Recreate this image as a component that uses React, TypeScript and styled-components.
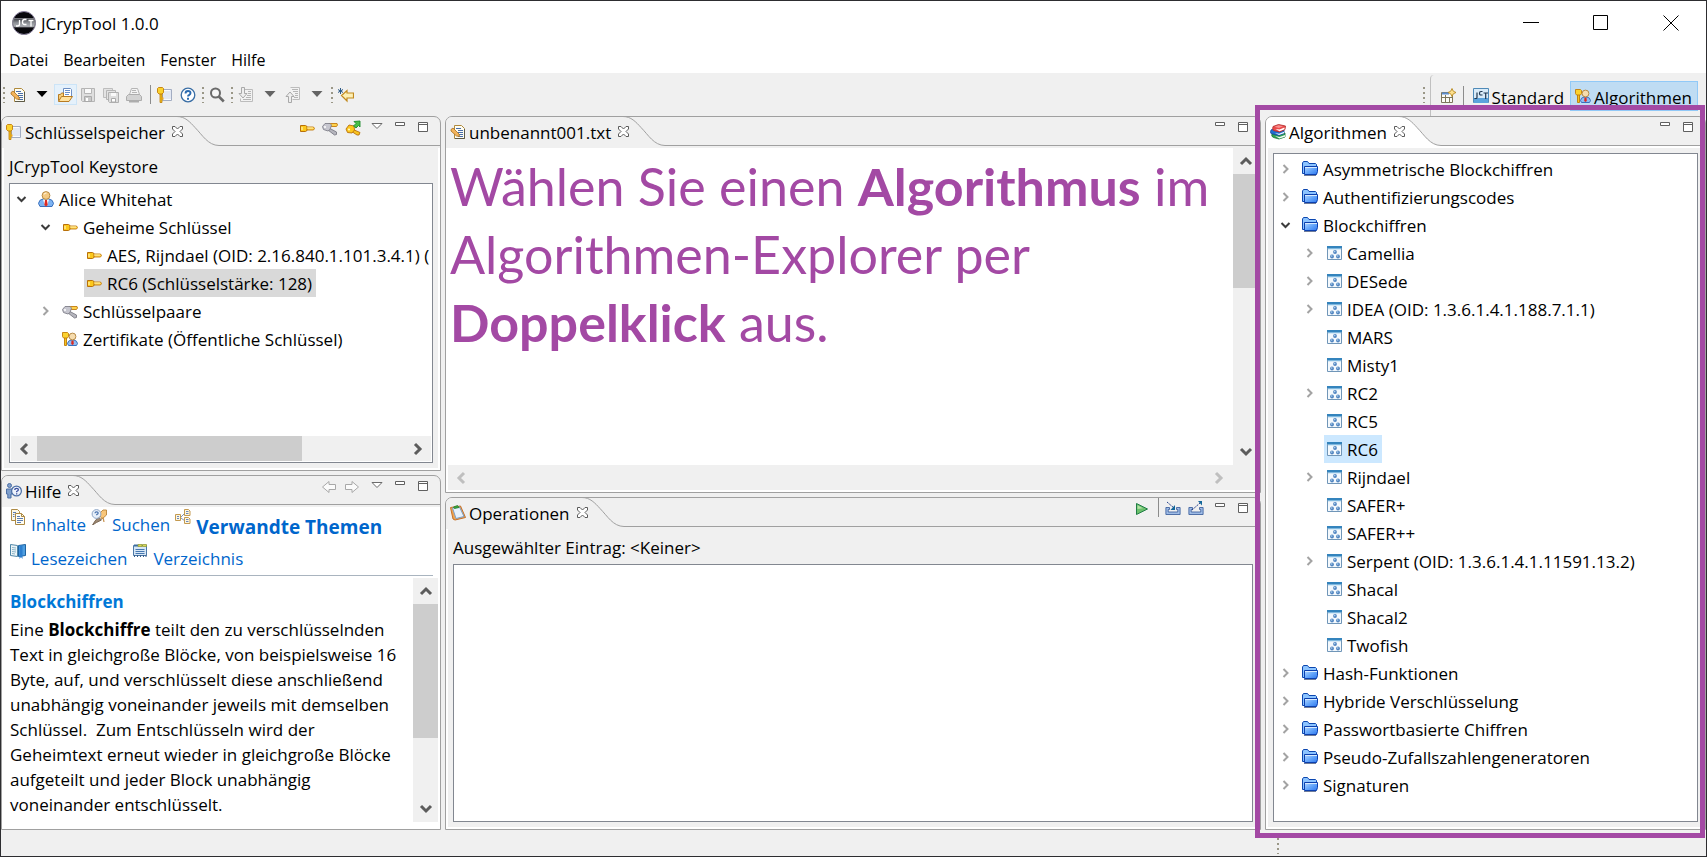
import React, { useState } from "react";
import styled, { createGlobalStyle, css } from "styled-components";

const purple = "#a349a4";
const line = "#a0a0a0";
const face = "#f0f0f0";

const GlobalStyle = createGlobalStyle`
  * { box-sizing: border-box; }
  html, body, #root { margin: 0; height: 100%; }
  body {
    font: 17px/28px "Open Sans", "Segoe UI", sans-serif;
    color: #000;
    background: ${face};
    overflow: hidden;
  }
  button { font: inherit; color: inherit; background: none; border: 0; padding: 0; }
  svg { display: block; flex: none; }
  ul { list-style: none; margin: 0; padding: 0; }
`;

/* ---------- icons ---------- */

const Svg = ({ children, w = 16, h = 16 }: { children: React.ReactNode; w?: number; h?: number }) => (
  <svg width={w} height={h} viewBox={`0 0 ${w} ${h}`} fill="none" aria-hidden="true">
    {children}
  </svg>
);

const LogoIcon = () => (
  <Svg w={24} h={24}>
    <defs>
      <linearGradient id="logoBand" x1="0" y1="0" x2="0" y2="1">
        <stop offset="0" stopColor="#3d4046" />
        <stop offset="0.5" stopColor="#8d9096" />
        <stop offset="1" stopColor="#b4b7bc" />
      </linearGradient>
    </defs>
    <circle cx="12" cy="12" r="11.500" fill="#08080c" stroke="#8f86a3" />
    <path d="M2 7.500h20l1.500 4-1.500 4.500H2L.5 12z" fill="url(#logoBand)" stroke="#8a8c92" strokeWidth="0.800" />
    <path d="M7.500 9v4q0 2-2 2H4M14.500 8.500h-2q-2 0-2 2.500t2 2.500h2M16.500 9.500h5M19 9.500v6" stroke="#fff" strokeWidth="1.300" />
  </Svg>
);

const EditIcon = () => (
  <Svg>
    <path d="M4.500 1.500h7l3 3v10h-10z" fill="#fdfdf4" stroke="#b08a3c" />
    <path d="M14.500 5v9.500H5" stroke="#5d5a48" />
    <path d="M6 4.500h5M8 6.500h5M8 8.500h5M9 10.500h4M8 12.500h5" stroke="#4a6ea9" />
    <path d="M1 5.500l2-1.500 6 6 .5 2.500-3-.5-5.500-5z" fill="#f3b45c" stroke="#a8701d" strokeWidth="0.800" />
  </Svg>
);

const OpenIcon = () => (
  <Svg>
    <path d="M6.500 1.500h7l1 1v8h-8z" fill="#fff" stroke="#6d8fc4" />
    <path d="M8 3.500h5M8 5.500h5M8 7.500h4" stroke="#6a90cc" />
    <path d="M1.500 13.500v-6h2l1-1.500h2v3.500h4z" fill="#f7cf7b" stroke="#b77b22" />
    <path d="M1.500 14.500l3-5h11l-3.500 5z" fill="#ffe2a0" stroke="#b77b22" />
  </Svg>
);

const SaveIcon = () => (
  <Svg>
    <path d="M1.500 1.500h13v13h-12l-1-1z" fill="#dedede" stroke="#b5b5b5" />
    <path d="M4.500 1.500h7v5h-7z" fill="#fafafa" stroke="#b5b5b5" />
    <path d="M4.500 14.500v-5h7v5z" fill="#c9c9c9" stroke="#aaa" />
    <path d="M6 11h2v3H6z" fill="#fff" />
  </Svg>
);

const SaveAllIcon = () => (
  <Svg>
    <path d="M.5 1.500h9v9h-9z" fill="#e3e3e3" stroke="#bdbdbd" />
    <path d="M3.500 3.500h9v9h-9z" fill="#e3e3e3" stroke="#b5b5b5" />
    <path d="M5.500 5.500h10v10h-9l-1-1z" fill="#dedede" stroke="#b0b0b0" />
    <path d="M8 6h5v3H8z" fill="#fafafa" />
    <path d="M8.500 15v-3.500h4V15z" fill="#fff" stroke="#aaa" />
  </Svg>
);

const PrintIcon = () => (
  <Svg>
    <path d="M5.500 1.500h6l2 6h-10z" fill="#f4f4f4" stroke="#b5b5b5" />
    <path d="M6 3.500h4M6 5.500h5" stroke="#b5b5b5" />
    <path d="M2.500 7.500h11l2 2v4h-15v-4z" fill="#d3d3d3" stroke="#adadad" />
    <path d="M3 14.500h10" stroke="#adadad" strokeWidth="2" />
  </Svg>
);

const KeystoreIcon = () => (
  <Svg>
    <path d="M5.500 2.500h9v11h-9z" fill="#e3e8f3" stroke="#a3adc2" />
    <path d="M7 3.500h6M7 12.500h7" stroke="#f9fbff" />
    <path d="M3 6h2v9.500H3z" fill="#f5c21e" stroke="#bd7c06" strokeWidth="0.800" />
    <path d="M.5 1.500l1-1h4l1 1v4l-1.500 1.500H2L.5 5.500z" fill="#fbd22f" stroke="#c37d09" strokeWidth="0.900" />
    <path d="M5 10.500h1.500v2H5z" fill="#f0a818" />
  </Svg>
);

const HelpIcon = () => (
  <Svg>
    <circle cx="8" cy="8" r="6.800" fill="#fff" stroke="#3a6ea5" strokeWidth="1.300" />
    <path d="M5.500 6.500q0-2.500 2.500-2.500t2.500 2q0 1.200-1.200 1.900Q8 8.600 8 9.500" stroke="#2a6ab0" strokeWidth="1.900" />
    <path d="M7 10.800h2v1.900H7z" fill="#2a6ab0" />
  </Svg>
);

const SearchIcon = () => (
  <Svg>
    <circle cx="6.500" cy="6" r="4.500" stroke="#6a6a6a" strokeWidth="2" fill="#f7f7f7" />
    <path d="M9.800 9.500l5 5" stroke="#6a6a6a" strokeWidth="2.600" />
  </Svg>
);

const ImportFileIcon = () => (
  <Svg>
    <path d="M6.500 2.500h8v12h-12v-3" fill="#f2f2f2" stroke="#bcbcbc" />
    <path d="M10 4.500h3M10 6.500h3M9 8.500h4M8 10.500h5M5 12.500h8" stroke="#b5b5b5" />
    <path d="M3.500.5h3v6h2.500L5 11 1 6.500h2.500z" fill="#eee" stroke="#a9a9a9" />
  </Svg>
);

const ExportFileIcon = () => (
  <Svg>
    <path d="M5.500.5h9v12h-7" fill="#f2f2f2" stroke="#bcbcbc" />
    <path d="M7 2.500h6M8 4.500h5M10 6.500h3M10 8.500h3M9 10.500h4" stroke="#b5b5b5" />
    <path d="M3.500 15.500h3v-6h2.500L5 5 1 9.500h2.500z" fill="#eee" stroke="#a9a9a9" />
  </Svg>
);

const LastEditIcon = () => (
  <Svg>
    <path d="M15.500 6v5H9v3L3.500 8.500 9 3.500V6z" fill="#fdf0b5" stroke="#c28a1e" strokeWidth="1.200" />
    <path d="M2.500 1v6M0 2.500l5 3M5 2.500l-5 3" stroke="#2c5a87" />
  </Svg>
);

const CaretIcon = ({ color = "#646464" }: { color?: string }) => (
  <Svg w={12} h={7}>
    <path d="M.5 0h11L6 6z" fill={color} />
  </Svg>
);

const KeyIcon = () => (
  <Svg>
    <path d="M6 7h8.500l1 1.500-1 1.500H6z" fill="#ffd24a" stroke="#c27a10" strokeWidth="0.900" />
    <path d="M1.500 5.500h5l1.500 1v4l-1.500 1h-5z" fill="#fcc81c" stroke="#b8700b" />
    <path d="M3 7v3" stroke="#fff3b0" strokeWidth="1.200" />
    <path d="M8 8h6" stroke="#fff1a8" />
  </Svg>
);

const KeyPairIcon = () => (
  <Svg>
    <path d="M7 3.500h8l.5 1.500-1 1.500H7z" fill="#ffd24a" stroke="#c27a10" strokeWidth="0.900" />
    <path d="M7 8l7.500 4v2.500l-2 .5L6 10z" fill="#b5b5bd" stroke="#7c7c86" strokeWidth="0.900" />
    <path d="M.5 6.500L3 3.500h5L9.500 5 8 9.500 6 11 1.500 9.500z" fill="#c6c6cf" stroke="#80808a" strokeWidth="0.900" />
    <circle cx="3" cy="7" r="1" fill="#fff" />
  </Svg>
);

const KeyAddIcon = () => (
  <Svg>
    <path d="M7 9l8 3.500-1 2.500h-2L6 11z" fill="#f8c420" stroke="#b8700b" strokeWidth="0.900" />
    <path d="M1 9l3-4 5 1 .5 4-2.500 3-4.500-.5z" fill="#fcc81c" stroke="#b8700b" strokeWidth="0.900" />
    <circle cx="4" cy="9.500" r="1.100" fill="#fff6c0" />
    <path d="M9 1.500l6-.5v6l-1.500-1.500L11 8 8.500 6l2.500-2.500z" fill="#48c048" stroke="#1e8a2c" strokeWidth="0.900" />
  </Svg>
);

const UserIcon = () => (
  <Svg>
    <path d="M.5 12.500Q1 8.500 5 8h6q4 .5 4.500 4.500L14 15.500H2z" fill="#7db3f2" stroke="#3a70bd" />
    <path d="M5 8.500h6L8.800 15H7.200z" fill="#fff" />
    <path d="M7 9h2l.7 5L8 15.500 6.300 14z" fill="#dd2a22" />
    <circle cx="8" cy="4.500" r="3.900" fill="#f3c983" stroke="#b0813b" strokeWidth="0.900" />
    <path d="M5.800 3.500q1-1.500 2.700-1.300" stroke="#fff0cf" strokeWidth="1.200" />
  </Svg>
);

const CertIcon = () => (
  <Svg>
    <path d="M5.500 12.500Q6 9.500 9 9h3q3 .5 3.500 3.500l-1 2h-8z" fill="#8fbdf2" stroke="#3a70bd" />
    <path d="M9.500 9.500h2l.3 3.500-1.300 1-1.300-1z" fill="#dd2a22" />
    <circle cx="10.500" cy="5.500" r="3.400" fill="#f6dcae" stroke="#b0813b" strokeWidth="0.900" />
    <path d="M2.500 6h2v8.500h-2z" fill="#f5c21e" stroke="#bd7c06" strokeWidth="0.900" />
    <path d="M.5 1.500h5l1 1v3L5.500 7h-4l-1-1.500z" fill="#fbd22f" stroke="#c37d09" strokeWidth="0.900" />
  </Svg>
);

const FolderIcon = () => (
  <Svg>
    <defs>
      <linearGradient id="folderFront" x1="0" y1="0" x2="1" y2="1">
        <stop offset="0" stopColor="#b4d8ff" />
        <stop offset="0.500" stopColor="#66a7fb" />
        <stop offset="1" stopColor="#2f78ee" />
      </linearGradient>
    </defs>
    <path d="M.5 12.500V2l1-1.500h4l1.500 2h6.500l1 1v9z" fill="#8cc4ff" stroke="#0c47b0" />
    <path d="M2.500 5.500h13v5l-1 3h-12z" fill="url(#folderFront)" stroke="#0b3fae" />
    <path d="M3 6.500h12" stroke="#d7ebff" />
    <path d="M2 14.500h12" stroke="#6f7c99" />
  </Svg>
);

const AlgoIcon = () => (
  <Svg>
    <path d="M1.500 1.500h14v13h-14z" fill="#f4f9fd" stroke="#7096b8" />
    <path d="M1 1h15v2H1z" fill="#3484bd" />
    <path d="M2 3h13v1H2z" fill="#7fb8df" />
    <path d="M2 4h13v1H2z" fill="#d5e9f6" />
    <g fill="#4f84c0">
      <circle cx="9" cy="7" r="1.900" />
      <circle cx="6" cy="11.500" r="1.900" />
      <circle cx="12" cy="11.500" r="1.900" />
    </g>
    <g fill="#b4d2ee">
      <circle cx="8.700" cy="6.600" r="0.800" />
      <circle cx="5.700" cy="11" r="0.800" />
      <circle cx="11.700" cy="11" r="0.800" />
    </g>
  </Svg>
);

const BooksIcon = () => (
  <Svg>
    <path d="M2 10q-1 2.500 1.500 3.500l5.500 1.500 6-2v-4z" fill="#2fa352" stroke="#1d7a38" strokeWidth="0.800" />
    <path d="M5 12l4.500 1 5.500-2v1.800l-5.500 1.700z" fill="#f4fbf5" />
    <path d="M1.500 5.500Q-.5 7.500 1 9.500l7.500 2L14 9.500V6z" fill="#1f6fd0" stroke="#16479b" strokeWidth="0.800" />
    <path d="M5 9l4 .8 5-2v1.500l-5 1.700z" fill="#eef5ff" />
    <path d="M3 2.500l5.500-2 7 1.500-.5 3.500-5.500 2.500-6-1.500Q2 4.500 3 2.500z" fill="#e94b4b" stroke="#b02a2a" strokeWidth="0.800" />
    <path d="M4.500 2.700l4-1.400 4.500 1L9 4z" fill="#fa8f8f" />
    <path d="M5.500 5l4 .6 5-2.100v1.700l-5 2z" fill="#fff" />
  </Svg>
);

const ClipboardIcon = () => (
  <Svg>
    <path d="M.5 2.500l10-1.500 5 11.500-10.500 2.500-2-1z" fill="#f0a552" stroke="#c3702a" />
    <path d="M2.500 3l7-1 4.500 9.500-8 2z" fill="#e6f1fc" stroke="#7a9fc8" />
    <path d="M3.500 2l4-1.500L9 2.500l-4.500 1z" fill="#3fae3f" stroke="#217a2b" strokeWidth="0.800" />
  </Svg>
);

const HelpViewIcon = () => (
  <Svg>
    <circle cx="3.500" cy="2.500" r="2" fill="#7f9fcc" stroke="#4b6ea5" />
    <path d="M.5 6h5.500v5H5v4H1.800v-4H.5z" fill="#7f9fcc" stroke="#4b6ea5" />
    <circle cx="10.500" cy="8" r="4.900" fill="#eef3fb" stroke="#4b6ea5" strokeWidth="1.200" />
    <path d="M8.800 7q0-1.700 1.800-1.700t1.800 1.400q0 1-1.700 1.800v.7M10.700 10.200v1.200" stroke="#3b4fa0" strokeWidth="1.300" />
  </Svg>
);

const ContentsIcon = () => (
  <Svg>
    <path d="M1.500 .5h6l2 2v9h-8z" fill="#fbf8e8" stroke="#ad8a44" />
    <path d="M5.500 4.500h6l3 3v8h-9z" fill="#fffdf2" stroke="#ad8a44" />
    <path d="M11.500 4.500v3h3" stroke="#ad8a44" />
    <path d="M3 3.500h3M3 5.500h1.500M3 7.500h1.500M7 7.500h3M7 9.500h6M7 11.500h6M7 13.500h4" stroke="#5b7db4" />
  </Svg>
);

const SearchHelpIcon = () => (
  <Svg>
    <path d="M8 5l4-4h3.500v5L11 10z" fill="#f8c67a" stroke="#b8843a" strokeWidth="0.900" />
    <path d="M7.500 8l3 3-5 2.500-4 2.500 2.500-4z" fill="#9c8873" stroke="#75614d" strokeWidth="0.900" />
    <circle cx="5.500" cy="5" r="4.400" fill="#e8f0fa" stroke="#8ea6c6" />
    <path d="M4 4.300q0-1.500 1.600-1.500t1.600 1.200q0 .9-1.500 1.600v.7" stroke="#4a73ad" strokeWidth="1.200" />
    <path d="M12 8l1 5" stroke="#c78f48" strokeWidth="1.200" />
  </Svg>
);

const RelatedIcon = () => (
  <Svg>
    <path d="M6 8l4-4M6 9l4 3" stroke="#8294b4" />
    <path d="M.5 5.500h5v6h-5zM9.500.5h4l1.500 1.500v4.500H9.500zM9.500 8.500h4l1.500 1.500v4.500H9.500z" fill="#fdf6df" stroke="#c49a50" />
    <path d="M2 7.500h2M2 9.500h2M11 2.500h2.500M11 4.500h2.500M11 10.500h2.500M11 12.500h2.500" stroke="#6c88ba" />
  </Svg>
);

const BookmarksIcon = () => (
  <Svg>
    <path d="M.5 1.500l7 1v11l-7-1z" fill="#edf5f8" stroke="#4f87a8" />
    <path d="M15.500 1.500l-7 1v11l7-1z" fill="#4f9fe0" stroke="#1e629f" />
    <path d="M2 4.500l4 .5M2 6.500l4 .5M2 8.500l4 .5M2 10.500l3 .5" stroke="#8db6c8" />
    <path d="M10 2.500h2.500V16L11 14l-1.500 2V3z" fill="#2d7fcf" />
  </Svg>
);

const IndexIcon = () => (
  <Svg>
    <path d="M1.500 2.500h13v10h-13z" fill="#d7e7f6" stroke="#4b78a8" />
    <path d="M2 1.500h4v2H2z" fill="#3c6d9d" />
    <path d="M6 1.500h4v2H6zM10.500 1.500h4v2h-4z" fill="#d7d858" stroke="#8b9430" strokeWidth="0.700" />
    <path d="M3.500 6.500h9M3.500 8.500h9M3.500 10.500h9" stroke="#4677b0" />
    <path d="M2.500 12v2M5.500 12v2M8.500 12v2M11.500 12v2M14 12v2" stroke="#3a5f8c" />
  </Svg>
);

const PlayIcon = () => (
  <Svg>
    <path d="M2.500 2.500L13.500 8l-11 5.500z" fill="#6cc06c" stroke="#1f7d45" />
    <path d="M3.500 4.200L9 7.200l-5.500.8z" fill="#b5e2a5" />
  </Svg>
);

const TrayIcon = ({ out }: { out?: boolean }) => (
  <Svg>
    <path d="M4.500 6.500H.9v7h14.200v-7h-3.600v2h1.300v2.500H3.200V8.500h1.300z" fill="#9fbce6" stroke="#41639f" strokeWidth="0.900" />
    {out ? (
      <>
        <path d="M4 9l8-7" stroke="#26418c" strokeDasharray="2 1" />
        <path d="M10 0h4v4.500z" fill="#12669a" />
      </>
    ) : (
      <>
        <path d="M2 1l7 6" stroke="#26418c" strokeDasharray="2 1" />
        <path d="M10 4v5H5.500z" fill="#12669a" />
      </>
    )}
  </Svg>
);

const HistoryIcon = ({ forward }: { forward?: boolean }) => (
  <Svg>
    <path
      d={forward ? "M.5 5.500v5h6.500v3L13.500 8 7 2.500v3z" : "M13.500 5.500v5H7v3L.5 8 7 2.500v3z"}
      fill="#fbfbfb"
      stroke="#a8a8a8"
    />
  </Svg>
);

const MenuTriangle = () => (
  <Svg>
    <path d="M4 3.500h10L9 8.500z" fill="#fff" stroke="#6b6b6b" />
  </Svg>
);

const MinimizeIcon = () => (
  <Svg>
    <path d="M4.500 2.500h9v3h-9z" fill="#fff" stroke="#606060" />
  </Svg>
);

const MaximizeIcon = () => (
  <Svg>
    <path d="M4.500 2.500h9v9h-9zM4.500 4.500h9" fill="#fff" stroke="#606060" />
  </Svg>
);

const CloseTabIcon = () => (
  <Svg w={11} h={11}>
    <path
      d="M.5.5h2.500l2.500 2.500L8 .5h2.500V3L8 5.500 10.500 8v2.500H8L5.500 8 3 10.500H.5V8L3 5.500.5 3z"
      fill="#fff"
      stroke="#5c5c5c"
    />
  </Svg>
);

const NewPerspectiveIcon = () => (
  <Svg>
    <path d="M1.500 4.500h11v10h-11z" fill="#fbfbf6" stroke="#7d765c" />
    <path d="M2 5.500h7" stroke="#5e8fd0" strokeWidth="2" />
    <path d="M5.500 7v7M2 9.500h10M9.500 9v5" stroke="#7d765c" />
    <path d="M12 .5l1.300 2.700L16 4.500l-2.700 1.300L12 8.500l-1.300-2.700L8 4.500l2.700-1.300z" fill="#fde08c" stroke="#b98a22" strokeWidth="0.900" />
  </Svg>
);

const JctIcon = () => (
  <Svg>
    <path d="M.5.500h15v14H.5z" fill="#d9ebf8" stroke="#4f8ab8" />
    <path d="M1 10h14v5H1z" fill="#5ba3dc" />
    <path d="M4 4.500v5q0 1-1 1H1.500M9.500 3.500H8q-1.500 0-1.500 1.800T8 7h1.500M10.500 5h4.500M12.700 5v6" stroke="#1e3650" strokeWidth="1.200" />
  </Svg>
);

const Chevron = ({ open }: { open?: boolean }) => (
  <Svg w={20} h={16}>
    {open ? (
      <path d="M5.500 6l4 4 4-4" stroke="#3c3c3c" strokeWidth="2" />
    ) : (
      <path d="M7.500 4l4 4-4 4" stroke="#a3a3a3" strokeWidth="2" />
    )}
  </Svg>
);

const rotations = { up: 0, right: 90, down: 180, left: 270 };
const ArrowIcon = ({ dir, muted }: { dir: keyof typeof rotations; muted?: boolean }) => (
  <Svg>
    <path
      d="M3 11l5-5 5 5"
      stroke={muted ? "#bfbfbf" : "#5c5c5c"}
      strokeWidth="3"
      transform={`rotate(${rotations[dir]} 8 8)`}
    />
  </Svg>
);

/* ---------- window frame ---------- */

const Window = styled.div`
  display: flex;
  flex-direction: column;
  height: 100%;
  border: 1px solid #2d2d30;
  background: ${face};
`;

const TitleBar = styled.header`
  display: flex;
  align-items: center;
  height: 44px;
  padding-left: 11px;
  background: #fff;
`;

const Title = styled.h1`
  margin: 0;
  flex: 1;
  padding: 2px 0 0 5px;
  font: inherit;
`;

const CaptionButton = styled.button`
  display: grid;
  place-items: center;
  width: 70px;
  height: 44px;
  &:hover { background: #e5e5e5; }
`;

const MenuBar = styled.nav`
  display: flex;
  height: 28px;
  padding-left: 8px;
  gap: 15px;
  background: #fff;
  font-size: 16px;
  line-height: 26px;
`;

const MenuItem = styled.button`
  padding-top: 2px;
`;

const Toolbar = styled.div`
  display: flex;
  align-items: center;
  height: 43px;
`;

const Tool = styled.button<{ $active?: boolean }>`
  display: grid;
  place-items: start;
  flex: none;
  width: 23px;
  height: 21px;
  padding: 2px 0 0 2px;
  border: 1px solid transparent;
  ${(p) => p.$active && css`background: #e5f1fb; border-color: #cce4f7;`}
`;

const DropTool = styled.button`
  display: grid;
  place-items: center;
  width: 24px;
  height: 21px;
`;

const Grip = styled.span`
  flex: none;
  width: 6px;
  height: 16px;
  background: repeating-linear-gradient(#9a9787 0 2px, transparent 2px 5px) 2px 0 / 2px 100% no-repeat;
`;

const Separator = styled.span`
  flex: none;
  width: 8px;
  height: 19px;
  background: linear-gradient(#8c8c8c, #8c8c8c) center / 1px 100% no-repeat;
`;

const Spacer = styled.span`
  flex: 1;
`;

const Perspectives = styled.div`
  display: flex;
  align-items: center;
  align-self: stretch;
  margin: 2px 8px 0 3px;
  padding-left: 6px;
  border-left: 1px solid #c0c0c0;
  border-top-left-radius: 4px;
`;

const PerspectiveButton = styled.button<{ $on?: boolean }>`
  display: flex;
  align-items: center;
  gap: 3px;
  height: 30px;
  padding: 0 5px 0 4px;
  border: 1px solid ${(p) => (p.$on ? "#91c9f7" : "transparent")};
  background: ${(p) => (p.$on ? "#bfdcf3" : "none")};
`;

const Label = styled.span`
  padding-top: 2px;
`;

const PerspectiveLabel = styled.span`
  padding-top: 4px;
`;

const Workbench = styled.main`
  flex: 1;
  min-height: 0;
  display: grid;
  grid-template-columns: minmax(0, 440fr) minmax(0, 816fr) minmax(0, 441fr);
  gap: 4px;
`;

const Column = styled.div<{ $rows?: string }>`
  position: relative;
  display: grid;
  grid-template-rows: ${(p) => p.$rows ?? "minmax(0, 1fr)"};
  gap: 4px;
  min-width: 0;
`;

const Highlight = styled.div`
  position: absolute;
  inset: -11px 1px -8px -10px;
  border: 5px solid ${purple};
  pointer-events: none;
`;

const StatusBar = styled.footer`
  display: flex;
  align-items: center;
  justify-content: flex-end;
  height: 26px;
  padding: 6px 425px 0 0;
`;

/* ---------- view panel ---------- */

const Panel = styled.section`
  display: flex;
  flex-direction: column;
  min-height: 0;
  border: 1px solid ${line};
  border-radius: 7px 7px 0 0;
  overflow: hidden;
`;

const PanelHeader = styled.div<{ $active?: boolean }>`
  display: flex;
  height: 31px;
  flex: none;
  border-bottom: 2px solid ${(p) => (p.$active ? "#fff" : face)};
`;

const Tab = styled.div<{ $active?: boolean }>`
  display: flex;
  align-items: center;
  gap: 3px;
  padding-left: 4px;
  line-height: 28px;
  white-space: nowrap;
  background: ${(p) => (p.$active ? "#fff" : face)};
`;

const TabTitle = styled.h2`
  margin: 0;
  padding-top: 2px;
  font: inherit;
`;

const TabClose = styled.button`
  margin: 0 0 1px 4px;
`;

const TabCurve = styled.svg`
  margin-left: -6px;
`;

const TabFill = styled.div`
  flex: 1;
  display: flex;
  justify-content: flex-end;
  align-items: flex-start;
  padding-right: 6px;
  border-bottom: 1px solid ${line};
`;

const Inset = styled.div<{ $plain?: boolean }>`
  flex: 1;
  min-height: 0;
  display: flex;
  flex-direction: column;
  border: solid #fff;
  border-width: 0 2px 2px;
  background: ${(p) => (p.$plain ? "#fff" : face)};
`;

const Padded = styled.div<{ $top?: boolean }>`
  flex: 1;
  min-height: 0;
  display: flex;
  flex-direction: column;
  padding: ${(p) => (p.$top ? "5px" : "0")} 5px 5px;
`;

const Caption = styled.p`
  margin: 0;
  padding-top: 2px;
  line-height: 33px;
`;

const Well = styled.div`
  flex: 1;
  min-height: 0;
  display: flex;
  flex-direction: column;
  padding: 1px;
  border: 1px solid #828790;
  background: #fff;
  overflow: hidden;
`;

type PanelProps = {
  title: string;
  icon: React.ReactNode;
  tools?: React.ReactNode;
  active?: boolean;
  children: React.ReactNode;
};

const ViewPanel = ({ title, icon, tools, active, children }: PanelProps) => (
  <Panel aria-label={title}>
    <PanelHeader $active={active}>
      <Tab $active={active}>
        {icon}
        <TabTitle>{title}</TabTitle>
        <TabClose aria-label={`${title} schließen`}>
          <CloseTabIcon />
        </TabClose>
      </Tab>
      <TabCurve width="42" height="29" viewBox="0 0 42 29" fill="none" aria-hidden="true">
        {active && <path d="M6 0C11 2 14 6 18 10.500C25 17.500 31 28.500 42 28.500V29H6z" fill="#fff" />}
        <path d="M0-.5C8-.5 13 5 18 10.500C25 17.500 31 28.500 42 28.500" stroke={line} />
      </TabCurve>
      <TabFill>
        {tools}
        <Tool aria-label="Minimieren"><MinimizeIcon /></Tool>
        <Tool aria-label="Maximieren"><MaximizeIcon /></Tool>
      </TabFill>
    </PanelHeader>
    {children}
  </Panel>
);

/* ---------- scroll bars ---------- */

const Bar = styled.div<{ $vertical?: boolean }>`
  flex: none;
  display: flex;
  flex-direction: ${(p) => (p.$vertical ? "column" : "row")};
  ${(p) => (p.$vertical ? "width: 25px;" : "height: 25px;")}
  background: ${face};
`;

const BarTrack = styled.div<{ $vertical?: boolean }>`
  flex: 1;
  display: flex;
  flex-direction: ${(p) => (p.$vertical ? "column" : "row")};
`;

const BarThumb = styled.div<{ $share: number }>`
  flex: 0 0 ${(p) => p.$share}%;
  background: #cdcdcd;
`;

const BarButton = styled.button`
  display: grid;
  place-items: center;
  width: 26px;
  height: 26px;
  max-width: 100%;
  max-height: 100%;
`;

const ScrollBar = ({ vertical, share, end }: { vertical?: boolean; share?: number; end?: React.ReactNode }) => (
  <Bar $vertical={vertical}>
    <BarButton aria-label={vertical ? "Nach oben" : "Nach links"}>
      <ArrowIcon dir={vertical ? "up" : "left"} muted={!share} />
    </BarButton>
    <BarTrack $vertical={vertical}>{share ? <BarThumb $share={share} /> : null}</BarTrack>
    <BarButton aria-label={vertical ? "Nach unten" : "Nach rechts"}>
      <ArrowIcon dir={vertical ? "down" : "right"} muted={!share} />
    </BarButton>
    {end}
  </Bar>
);

const BarCorner = styled.span`
  width: 26px;
`;

/* ---------- tree ---------- */

type Node = { label: string; icon: React.ReactNode; open?: boolean; more?: boolean; children?: Node[] };

const TreeRoot = styled.ul`
  flex: 1;
  min-height: 0;
  overflow: hidden;
`;

const TreeRow = styled.div<{ $level: number }>`
  display: flex;
  height: 28px;
  padding-left: ${(p) => p.$level * 24 + 1}px;
`;

const Expander = styled.button`
  display: grid;
  place-items: center;
  flex: none;
  width: 20px;
  margin-right: 4px;
`;

const TreeItem = styled.button<{ $mark?: string }>`
  display: flex;
  align-items: center;
  gap: 5px;
  padding: 0 4px 0 2px;
  white-space: nowrap;
  background: ${(p) => p.$mark ?? "none"};
`;

type BranchProps = { nodes: Node[]; level: number; mark: string; selected: string; onSelect: (s: string) => void };

const Branch = ({ node, level, ...rest }: Omit<BranchProps, "nodes"> & { node: Node }) => {
  const [open, setOpen] = useState(!!node.open);
  const expandable = node.more || !!node.children;
  return (
    <li role="treeitem" aria-expanded={expandable ? open : undefined}>
      <TreeRow $level={level}>
        {expandable ? (
          <Expander aria-label={`${node.label} umschalten`} onClick={() => setOpen(!open)}>
            <Chevron open={open} />
          </Expander>
        ) : (
          <Expander as="span" />
        )}
        <TreeItem
          $mark={rest.selected === node.label ? rest.mark : undefined}
          onClick={() => rest.onSelect(node.label)}
        >
          {node.icon}
          <Label>{node.label}</Label>
        </TreeItem>
      </TreeRow>
      {open && node.children && (
        <ul role="group">
          {node.children.map((c) => (
            <Branch key={c.label} node={c} level={level + 1} {...rest} />
          ))}
        </ul>
      )}
    </li>
  );
};

const Tree = ({ nodes, initial, mark }: { nodes: Node[]; initial: string; mark: string }) => {
  const [selected, setSelected] = useState(initial);
  return (
    <TreeRoot role="tree">
      {nodes.map((n) => (
        <Branch key={n.label} node={n} level={0} mark={mark} selected={selected} onSelect={setSelected} />
      ))}
    </TreeRoot>
  );
};

const keyNodes: Node[] = [
  {
    label: "Alice Whitehat",
    icon: <UserIcon />,
    open: true,
    children: [
      {
        label: "Geheime Schlüssel",
        icon: <KeyIcon />,
        open: true,
        children: [
          { label: "AES, Rijndael (OID: 2.16.840.1.101.3.4.1) (", icon: <KeyIcon /> },
          { label: "RC6 (Schlüsselstärke: 128)", icon: <KeyIcon /> },
        ],
      },
      { label: "Schlüsselpaare", icon: <KeyPairIcon />, more: true },
      { label: "Zertifikate (Öffentliche Schlüssel)", icon: <CertIcon /> },
    ],
  },
];

const folder = (label: string): Node => ({ label, icon: <FolderIcon />, more: true });
const algo = (label: string, more = false): Node => ({ label, icon: <AlgoIcon />, more });

const algoNodes: Node[] = [
  folder("Asymmetrische Blockchiffren"),
  folder("Authentifizierungscodes"),
  {
    ...folder("Blockchiffren"),
    open: true,
    children: [
      algo("Camellia", true),
      algo("DESede", true),
      algo("IDEA (OID: 1.3.6.1.4.1.188.7.1.1)", true),
      algo("MARS"),
      algo("Misty1"),
      algo("RC2", true),
      algo("RC5"),
      algo("RC6"),
      algo("Rijndael", true),
      algo("SAFER+"),
      algo("SAFER++"),
      algo("Serpent (OID: 1.3.6.1.4.1.11591.13.2)", true),
      algo("Shacal"),
      algo("Shacal2"),
      algo("Twofish"),
    ],
  },
  folder("Hash-Funktionen"),
  folder("Hybride Verschlüsselung"),
  folder("Passwortbasierte Chiffren"),
  folder("Pseudo-Zufallszahlengeneratoren"),
  folder("Signaturen"),
];

/* ---------- editor and help ---------- */

const ScrollRow = styled.div`
  flex: 1;
  min-height: 0;
  display: flex;
`;

const EditorText = styled.div`
  flex: 1;
  min-width: 0;
  padding: 4px 2px;
  font: 52px/68px Lato, Calibri, sans-serif;
  color: ${purple};
  background: #fff;
  white-space: nowrap;
  overflow: hidden;
`;

const HelpLinks = styled.nav`
  margin: 0 5px;
  border-bottom: 1px solid #a9b4bf;
`;

const HelpLinkRow = styled.div`
  display: flex;
  gap: 5px;
  height: 34px;
  padding-left: 1px;
`;

const HelpLink = styled.a<{ $current?: boolean }>`
  display: flex;
  align-items: flex-start;
  gap: 5px;
  padding-top: 2px;
  line-height: 32px;
  color: #0066cc;
  text-decoration: none;
  white-space: nowrap;
  ${(p) => p.$current && css`font-size: 19px; line-height: 36px; font-weight: 700;`}
`;

const HelpScroll = styled.div`
  flex: 1;
  min-height: 0;
  display: flex;
  margin: 2px 0 5px;
`;

const HelpBody = styled.article`
  flex: 1;
  padding: 9px 0 0 6px;
  line-height: 25px;
  white-space: nowrap;
  overflow: hidden;
`;

const HelpHeading = styled.h3`
  margin: 0;
  font-size: 17px;
  line-height: 30px;
  color: #0078d7;
`;

const HelpText = styled.p`
  margin: 0;
`;

export default function App() {
  return (
    <Window>
      <GlobalStyle />
      <TitleBar>
        <LogoIcon />
        <Title>JCrypTool 1.0.0</Title>
        <CaptionButton aria-label="Fenster minimieren">
          <Svg><path d="M0 7.500h16" stroke="#000" /></Svg>
        </CaptionButton>
        <CaptionButton aria-label="Fenster maximieren">
          <Svg><path d="M.5.5h14v14H.5z" stroke="#000" /></Svg>
        </CaptionButton>
        <CaptionButton aria-label="Fenster schließen">
          <Svg><path d="M.5.5l15 15M15.500.5l-15 15" stroke="#000" /></Svg>
        </CaptionButton>
      </TitleBar>
      <MenuBar>
        {["Datei", "Bearbeiten", "Fenster", "Hilfe"].map((m) => (
          <MenuItem key={m}>{m}</MenuItem>
        ))}
      </MenuBar>
      <Toolbar>
        <Grip />
        <Tool aria-label="Neu"><EditIcon /></Tool>
        <DropTool aria-label="Neu, Auswahl"><CaretIcon color="#000" /></DropTool>
        <Tool aria-label="Öffnen" $active><OpenIcon /></Tool>
        <Tool aria-label="Speichern"><SaveIcon /></Tool>
        <Tool aria-label="Alle speichern"><SaveAllIcon /></Tool>
        <Tool aria-label="Drucken"><PrintIcon /></Tool>
        <Separator />
        <Tool aria-label="Schlüsselspeicher"><KeystoreIcon /></Tool>
        <Tool aria-label="Hilfe"><HelpIcon /></Tool>
        <Grip />
        <Tool aria-label="Suchen"><SearchIcon /></Tool>
        <Grip />
        <Tool aria-label="Nächste Anmerkung"><ImportFileIcon /></Tool>
        <DropTool aria-label="Nächste Anmerkung, Auswahl"><CaretIcon /></DropTool>
        <Tool aria-label="Vorherige Anmerkung"><ExportFileIcon /></Tool>
        <DropTool aria-label="Vorherige Anmerkung, Auswahl"><CaretIcon /></DropTool>
        <Grip />
        <Tool aria-label="Letzte Bearbeitungsposition"><LastEditIcon /></Tool>
        <Spacer />
        <Grip />
        <Perspectives>
          <Tool aria-label="Perspektive öffnen"><NewPerspectiveIcon /></Tool>
          <Separator />
          <PerspectiveButton><JctIcon /><PerspectiveLabel>Standard</PerspectiveLabel></PerspectiveButton>
          <PerspectiveButton $on><CertIcon /><PerspectiveLabel>Algorithmen</PerspectiveLabel></PerspectiveButton>
        </Perspectives>
      </Toolbar>
      <Workbench>
        <Column $rows="minmax(0, 1fr) minmax(0, 1fr)">
          <ViewPanel
            title="Schlüsselspeicher"
            icon={<KeystoreIcon />}
            tools={
              <>
                <Tool aria-label="Neuer Schlüssel"><KeyIcon /></Tool>
                <Tool aria-label="Neues Schlüsselpaar"><KeyPairIcon /></Tool>
                <Tool aria-label="Schlüssel importieren"><KeyAddIcon /></Tool>
                <Tool aria-label="Menü"><MenuTriangle /></Tool>
              </>
            }
          >
            <Inset>
              <Padded>
                <Caption>JCrypTool Keystore</Caption>
                <Well>
                  <Tree nodes={keyNodes} initial="RC6 (Schlüsselstärke: 128)" mark="#d9d9d9" />
                  <ScrollBar share={72} />
                </Well>
              </Padded>
            </Inset>
          </ViewPanel>
          <ViewPanel
            title="Hilfe"
            icon={<HelpViewIcon />}
            tools={
              <>
                <Tool aria-label="Zurück"><HistoryIcon /></Tool>
                <Tool aria-label="Vorwärts"><HistoryIcon forward /></Tool>
                <Tool aria-label="Menü"><MenuTriangle /></Tool>
              </>
            }
          >
            <Inset $plain>
              <HelpLinks>
                <HelpLinkRow>
                  <HelpLink href="#inhalte"><ContentsIcon />Inhalte</HelpLink>
                  <HelpLink href="#suchen"><SearchHelpIcon />Suchen</HelpLink>
                  <HelpLink href="#verwandt" $current><RelatedIcon />Verwandte Themen</HelpLink>
                </HelpLinkRow>
                <HelpLinkRow>
                  <HelpLink href="#lesezeichen"><BookmarksIcon />Lesezeichen</HelpLink>
                  <HelpLink href="#verzeichnis"><IndexIcon />Verzeichnis</HelpLink>
                </HelpLinkRow>
              </HelpLinks>
              <HelpScroll>
                <HelpBody>
                  <HelpHeading>Blockchiffren</HelpHeading>
                  <HelpText>
                    Eine <b>Blockchiffre</b> teilt den zu verschlüsselnden<br />
                    Text in gleichgroße Blöcke, von beispielsweise 16<br />
                    Byte, auf, und verschlüsselt diese anschließend<br />
                    unabhängig voneinander jeweils mit demselben<br />
                    Schlüssel.&nbsp; Zum Entschlüsseln wird der<br />
                    Geheimtext erneut wieder in gleichgroße Blöcke<br />
                    aufgeteilt und jeder Block unabhängig<br />
                    voneinander entschlüsselt.
                  </HelpText>
                </HelpBody>
                <ScrollBar vertical share={70} />
              </HelpScroll>
            </Inset>
          </ViewPanel>
        </Column>
        <Column $rows="minmax(0, 377fr) minmax(0, 333fr)">
          <ViewPanel title="unbenannt001.txt" icon={<EditIcon />}>
            <Inset>
              <ScrollRow>
                <EditorText role="textbox" aria-multiline="true" aria-label="unbenannt001.txt">
                  Wählen Sie einen <b>Algorithmus</b> im<br />
                  Algorithmen-Explorer per<br />
                  <b>Doppelklick</b> aus.
                </EditorText>
                <ScrollBar vertical share={43} />
              </ScrollRow>
              <ScrollBar end={<BarCorner />} />
            </Inset>
          </ViewPanel>
          <ViewPanel
            title="Operationen"
            icon={<ClipboardIcon />}
            tools={
              <>
                <Tool aria-label="Ausführen"><PlayIcon /></Tool>
                <Separator />
                <Tool aria-label="Importieren"><TrayIcon /></Tool>
                <Tool aria-label="Exportieren"><TrayIcon out /></Tool>
              </>
            }
          >
            <Inset>
              <Padded>
                <Caption>Ausgewählter Eintrag: &lt;Keiner&gt;</Caption>
                <Well />
              </Padded>
            </Inset>
          </ViewPanel>
        </Column>
        <Column>
          <ViewPanel title="Algorithmen" icon={<BooksIcon />} active>
            <Inset>
              <Padded $top>
                <Well>
                  <Tree nodes={algoNodes} initial="RC6" mark="#cce8ff" />
                </Well>
              </Padded>
            </Inset>
          </ViewPanel>
          <Highlight />
        </Column>
      </Workbench>
      <StatusBar>
        <Grip />
      </StatusBar>
    </Window>
  );
}
